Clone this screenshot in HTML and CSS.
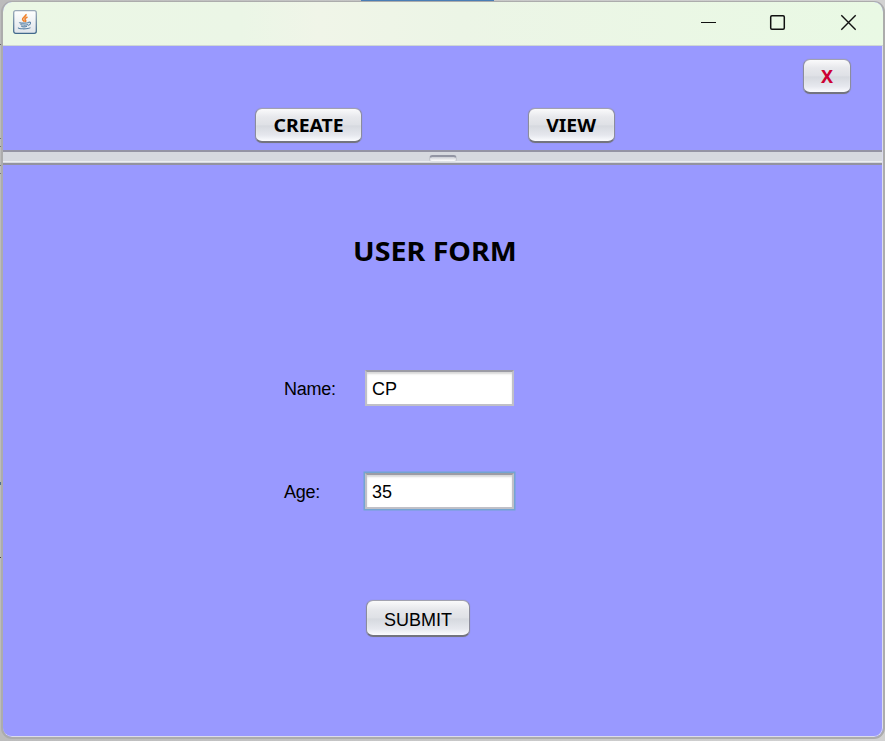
FILE: index.html
```html
<!DOCTYPE html>
<html lang="en">
<head>
<meta charset="utf-8">
<title>User Form</title>
<link rel="stylesheet" href="styles.css">
</head>
<body>
<main class="window">
  <header class="titlebar">
    <svg class="app-icon" width="24" height="24" viewBox="0 0 24 24" fill="none">
      <defs><linearGradient id="tile" x2="0" y2="1"><stop stop-color="#fff"/><stop offset="1" stop-color="#dfe4ea"/></linearGradient>
      <linearGradient id="edge" x2="0" y2="1"><stop stop-color="#9aa9b8"/><stop offset="1" stop-color="#41698c"/></linearGradient></defs>
      <rect x=".7" y=".7" width="22.6" height="22.6" rx="2" fill="url(#tile)" stroke="url(#edge)" stroke-width="1.3"/>
      <path d="M12.800 4.200c1.200 2-4 3.200-3.200 5.300.4 1 1.500 1.400 1.800 2.300M14.500 7c-2.500 1-3.200 2-2 3.200.6.700.1 1.300-.6 1.700" stroke="#f0812a" stroke-width="1.600"/>
      <path d="M6.500 12.300c-1 1 7 1.200 9.500.1M7.500 14.300c1 1 5.500 1 7.500.2M8.300 16.200c1.500.8 4 .7 5.700.1M15.500 12.300c3-.8 2.600 2.200-.3 3.200M5.500 17.500c-1.500 1.700 9.500 1.800 12 .1" stroke="#5c83a6" stroke-width="1.100"/>
    </svg>
    <svg class="caption" width="160" height="20" viewBox="0 0 160 20" fill="none" stroke="#111">
      <path d="M1 10.500h15" stroke-width="1.200"/>
      <rect x="70.700" y="3.700" width="13.600" height="13.600" rx="1.200" stroke-width="1.500"/>
      <path d="M141.300 3.300l14.400 14.400M155.700 3.300l-14.400 14.400" stroke-width="1.400"/>
    </svg>
  </header>
  <section class="toolbar">
    <button class="btn close">X</button>
    <div class="nav">
      <button class="btn create"><span>CREATE</span></button>
      <button class="btn view"><span>VIEW</span></button>
    </div>
  </section>
  <div class="divider"><span class="grip"></span></div>
  <section class="form">
    <h1>USER FORM</h1>
    <div class="row"><label for="name">Name:</label><input id="name" value="CP"></div>
    <div class="row age"><label for="age">Age:</label><input id="age" class="focused" value="35"></div>
    <button class="btn submit">SUBMIT</button>
  </section>
</main>
</body>
</html>
```
FILE: styles.css
```css
* { box-sizing: border-box; }
html { height: 100%; background: #c9c9c9; }
body {
  margin: 0;
  height: 741px;
  overflow: hidden;
  background:
    linear-gradient(#4a7db5, #4a7db5) 361px 0 / 133px 2px no-repeat,
    linear-gradient(#666, #666) 0 44px / 2px 1px no-repeat,
    linear-gradient(#777, #777) 0 138px / 2px 1px no-repeat,
    linear-gradient(#777, #777) 0 146px / 2px 1px no-repeat,
    linear-gradient(#777, #777) 0 165px / 2px 1px no-repeat,
    linear-gradient(#777, #777) 0 173px / 2px 1px no-repeat,
    linear-gradient(#51708f, #51708f) 0 482px / 2px 3px no-repeat,
    linear-gradient(#444, #444) 0 557px / 2px 1px no-repeat,
    linear-gradient(90deg, #bcbcbc, #d2d2d2);
}
.window {
  width: 884px;
  height: 738px;
  margin: 0 0 0 1px;
  border: 2px solid #acacac;
  border-top-width: 1px;
  border-radius: 11px;
  overflow: hidden;
  background: #9999ff;
  position: relative;
  top: 1px;
}
.window::after {
  content: "";
  position: absolute;
  inset: 44px 0 0;
  border: solid #dcdcec;
  border-width: 0 1px 1px 0;
  border-radius: 0 0 9px 9px;
  pointer-events: none;
}
.titlebar {
  height: 44px;
  display: flex;
  justify-content: space-between;
  padding: 8px 23px 0 10px;
  border-bottom: 1px solid #ced6d4;
  background: linear-gradient(90deg, #ebf7e5, #ebf6e6 27%, #f0f5e8 36%, #ecf5e6 52%, #e9f9e4);
}
.caption { margin-top: 2px; }
.toolbar {
  height: 104px;
  padding: 13px 32px 0 0;
  display: flex;
  flex-direction: column;
}
.btn {
  display: block;
  height: 35px;
  padding: 0 0 1px;
  border: 1px solid #8b8c9c;
  border-top-color: #a2a2af;
  border-bottom: 2px solid #73747f;
  border-radius: 7px;
  background: linear-gradient(#fafafb, #e7e8ec 25%, #dfe1e6 49%, #d6d9df 53%, #e6e8ee 82%, #fbfcff);
  box-shadow: inset 0 0 1px #fff, 0 0 1px #85859e;
  color: #000;
  font: bold 18px/24px "Noto Sans", sans-serif;
  text-align: center;
  white-space: nowrap;
}
.close { width: 48px; align-self: flex-end; color: #cc0033; }
.nav { display: flex; margin: 14px 0 0 252px; }
.nav span { display: inline-block; transform: scaleX(1.08); }
.create { width: 107px; }
.view { width: 87px; margin-left: 166px; }
.divider {
  height: 15px;
  display: flex;
  padding-left: 426px;
  border-top: 2px solid #9494a4;
  border-bottom: 2px solid #93939f;
  background: linear-gradient(#d6d9df 9px, #edeef1 9px, #edeef1 10px, #d6d9df 10px);
}
.grip {
  width: 28px;
  height: 7px;
  margin-top: 3px;
  border: 1px solid #c4c7ce;
  border-top: 2px solid #9295a3;
  border-bottom-color: #e2e4e8;
  border-radius: 4px;
  background: linear-gradient(#c9ccd3, #fff);
}
.form { padding-left: 281px; }
h1 {
  width: max-content;
  margin: 68px 0 0 69px;
  font: bold 27px/36px "Noto Sans", sans-serif;
  white-space: nowrap;
  transform: scaleX(1.06);
  transform-origin: left;
}
.row {
  display: flex;
  align-items: center;
  height: 39px;
  margin-top: 99px;
  font: 18px/22px "Liberation Sans", sans-serif;
}
.age { margin-top: 64px; }
label { width: 81px; padding-top: 2px; letter-spacing: -.25px; }
input {
  width: 149px;
  height: 36px;
  margin: 0;
  padding: 3px 5px 0;
  border: 2px solid #c0c0c7;
  border-top-color: #9c9ca5;
  outline: 0;
  background: #fff;
  box-shadow: inset 0 2px 2px #d8d8d8;
  color: #000;
  font: inherit;
  letter-spacing: -.1px;
}
.focused { box-shadow: 0 0 0 1.500px #73a4d1, inset 0 2px 2px #d8d8d8; }
.submit {
  width: 104px;
  height: 37px;
  margin: 90px 0 0 82px;
  padding-top: 4px;
  font: 18px/24px "Liberation Sans", sans-serif;
}
```
